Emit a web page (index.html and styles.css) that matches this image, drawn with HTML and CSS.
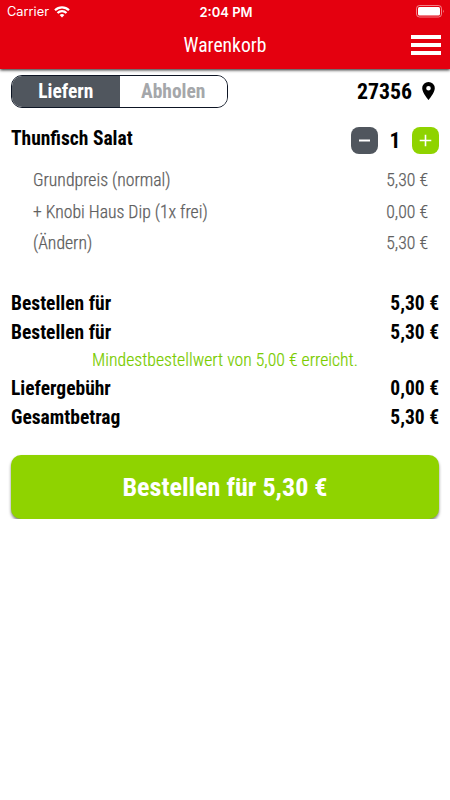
FILE: index.html
```html
<!DOCTYPE html>
<html lang="de">
<head>
    <meta charset="UTF-8">
    <meta name="viewport" content="width=device-width, initial-scale=1.0">
    <title>Warenkorb</title>
    <link rel="stylesheet" href="styles.css">
</head>
<body>
    <header class="header">
        <div class="status-bar">
            <div class="carrier">
                <span>Carrier</span>
                <svg width="16" height="12" viewBox="0 0 16 12" fill="none" stroke="#fff" stroke-width="2.2">
                    <path d="M1 4.3a10 10 0 0 1 14 0M3.5 7a6.4 6.4 0 0 1 9 0"/>
                    <path d="M5.6 9.1a3.5 3.5 0 0 1 4.8 0L8 11.6z" fill="#fff" stroke="none"/>
                </svg>
            </div>
            <span class="time">2:04 PM</span>
            <svg class="battery" width="29" height="13" viewBox="0 0 29 13">
                <rect x=".5" y=".5" width="25" height="11.5" rx="3" fill="none" stroke="#fff" stroke-opacity=".5"/>
                <rect x="2" y="2" width="22" height="8.5" rx="1.5" fill="#fff"/>
                <path d="M27 4.5q1.5 1.7 0 3.5z" fill="#fff" fill-opacity=".6"/>
            </svg>
        </div>
        <div class="nav-bar">
            <h1 class="title">Warenkorb</h1>
            <button class="menu-btn" aria-label="Menü"><span></span><span></span><span></span></button>
        </div>
    </header>

    <main class="cart">
        <div class="top-row">
            <div class="toggle">
                <button class="toggle-btn active">Liefern</button>
                <button class="toggle-btn">Abholen</button>
            </div>
            <div class="location">
                <span>27356</span>
                <svg width="13" height="18" viewBox="0 0 13 18">
                    <path d="M6.5 0A6.3 6.3 0 0 0 .2 6.3C.2 11 6.5 18 6.5 18s6.3-7 6.3-11.7A6.3 6.3 0 0 0 6.5 0zm0 8.6a2.3 2.3 0 1 1 0-4.6 2.3 2.3 0 0 1 0 4.6z" fill="#000"/>
                </svg>
            </div>
        </div>

        <div class="item-row">
            <h2 class="item-name">Thunfisch Salat</h2>
            <div class="quantity">
                <button class="qty-btn minus" aria-label="Weniger">
                    <svg width="13" height="13" viewBox="0 0 13 13"><path d="M1 6.5h11" stroke="#fff" stroke-width="2"/></svg>
                </button>
                <span class="count">1</span>
                <button class="qty-btn plus" aria-label="Mehr">
                    <svg width="13" height="13" viewBox="0 0 13 13"><path d="M.7 6.5h11.6M6.5.7v11.6" stroke="#fff" stroke-width="1.6"/></svg>
                </button>
            </div>
        </div>

        <div class="details">
            <div class="detail"><span>Grundpreis (normal)</span><span>5,30 €</span></div>
            <div class="detail"><span>+ Knobi Haus Dip (1x frei)</span><span>0,00 €</span></div>
            <div class="detail"><span>(Ändern)</span><span>5,30 €</span></div>
        </div>

        <div class="totals">
            <div class="total"><span>Bestellen für</span><span>5,30 €</span></div>
            <div class="total"><span>Bestellen für</span><span>5,30 €</span></div>
            <p class="minimum">Mindestbestellwert von 5,00 € erreicht.</p>
            <div class="total"><span>Liefergebühr</span><span>0,00 €</span></div>
            <div class="total"><span>Gesamtbetrag</span><span>5,30 €</span></div>
        </div>

        <button class="order-btn">Bestellen für 5,30 €</button>
    </main>
</body>
</html>
```

FILE: styles.css
```css
* {
    box-sizing: border-box;
}

body {
    margin: 0;
    background-color: #fff;
    color: #000;
    font-family: "Roboto Condensed", Roboto, sans-serif;
    font-stretch: 75%;
}

button {
    border: none;
    padding: 0;
    font: inherit;
    cursor: pointer;
}

svg {
    display: block;
}

.header {
    height: 69px;
    background-color: #e4000f;
    color: #fff;
    box-shadow: 0 1px 3px rgba(0, 0, 0, 0.9);
}

/* Status bar */
.status-bar {
    display: grid;
    grid-template-columns: 1fr auto 1fr;
    align-items: center;
    height: 23px;
    padding: 0 5px 0 7px;
    font-family: Inter, sans-serif;
    font-stretch: normal;
    font-size: 12.8px;
}

.carrier {
    display: flex;
    align-items: center;
    gap: 5px;
}

.time {
    font-weight: 600;
    font-size: 13px;
}

.battery {
    justify-self: end;
}

/* Title and menu */
.nav-bar {
    display: grid;
    grid-template-columns: 1fr auto 1fr;
    align-items: center;
    height: 44px;
    padding: 0 9px;
}

.title {
    grid-column: 2;
    margin: 0;
    font-size: 19.6px;
    font-weight: 400;
}

.menu-btn {
    justify-self: end;
    display: flex;
    flex-direction: column;
    gap: 4px;
    width: 30px;
    background: none;
}

.menu-btn span {
    height: 4px;
    background-color: #fff;
}

.cart {
    padding: 6px 11px 0;
}

.top-row, .item-row, .detail, .total {
    display: flex;
    justify-content: space-between;
}

.toggle {
    display: flex;
    width: 217px;
    height: 33px;
    border: 1px solid #0d1524;
    border-radius: 11px;
    overflow: hidden;
}

.toggle-btn {
    flex: 1;
    background-color: #fff;
    color: #a5a7aa;
    font-size: 19.5px;
    font-weight: 700;
}

.toggle-btn.active {
    background-color: #50565e;
    color: #fff;
}

.location {
    display: flex;
    align-items: center;
    gap: 10px;
    padding: 0 4px 1px 0;
    font-size: 21.8px;
    font-weight: 700;
}

/* Cart item */
.item-row {
    height: 47px;
    margin-top: 10px;
}

.item-name {
    margin: 9px 0 0;
    font-size: 19.5px;
    line-height: 24px;
    font-weight: 700;
}

.quantity {
    display: flex;
    align-items: center;
    height: 45px;
}

.qty-btn {
    display: flex;
    align-items: center;
    justify-content: center;
    width: 27px;
    height: 27px;
    border-radius: 8px;
}

.minus {
    background-color: #50565e;
}

.plus {
    background-color: #8fd300;
}

.count {
    width: 34px;
    text-align: center;
    font-size: 21.8px;
    font-weight: 700;
}

.details {
    padding: 0 11px 0 22px;
    color: #606060;
    font-size: 17.7px;
    font-weight: 300;
    line-height: 31.5px;
    -webkit-text-stroke: 0.25px;
}

/* Totals */
.totals {
    margin-top: 29px;
    font-size: 19.5px;
    line-height: 29.5px;
    font-weight: 700;
}

.minimum {
    margin: 0;
    padding-bottom: 1px;
    color: #7acc00;
    font-size: 17.7px;
    font-weight: 300;
    line-height: 25px;
    text-align: center;
    -webkit-text-stroke: 0.2px;
}

.order-btn {
    display: block;
    width: 100%;
    height: 64px;
    margin-top: 22px;
    border-radius: 10px;
    background-color: #8fd300;
    color: #fff;
    font-size: 26.1px;
    font-weight: 700;
    box-shadow: 0 2px 3px rgba(0, 0, 0, 0.5);
}
```
